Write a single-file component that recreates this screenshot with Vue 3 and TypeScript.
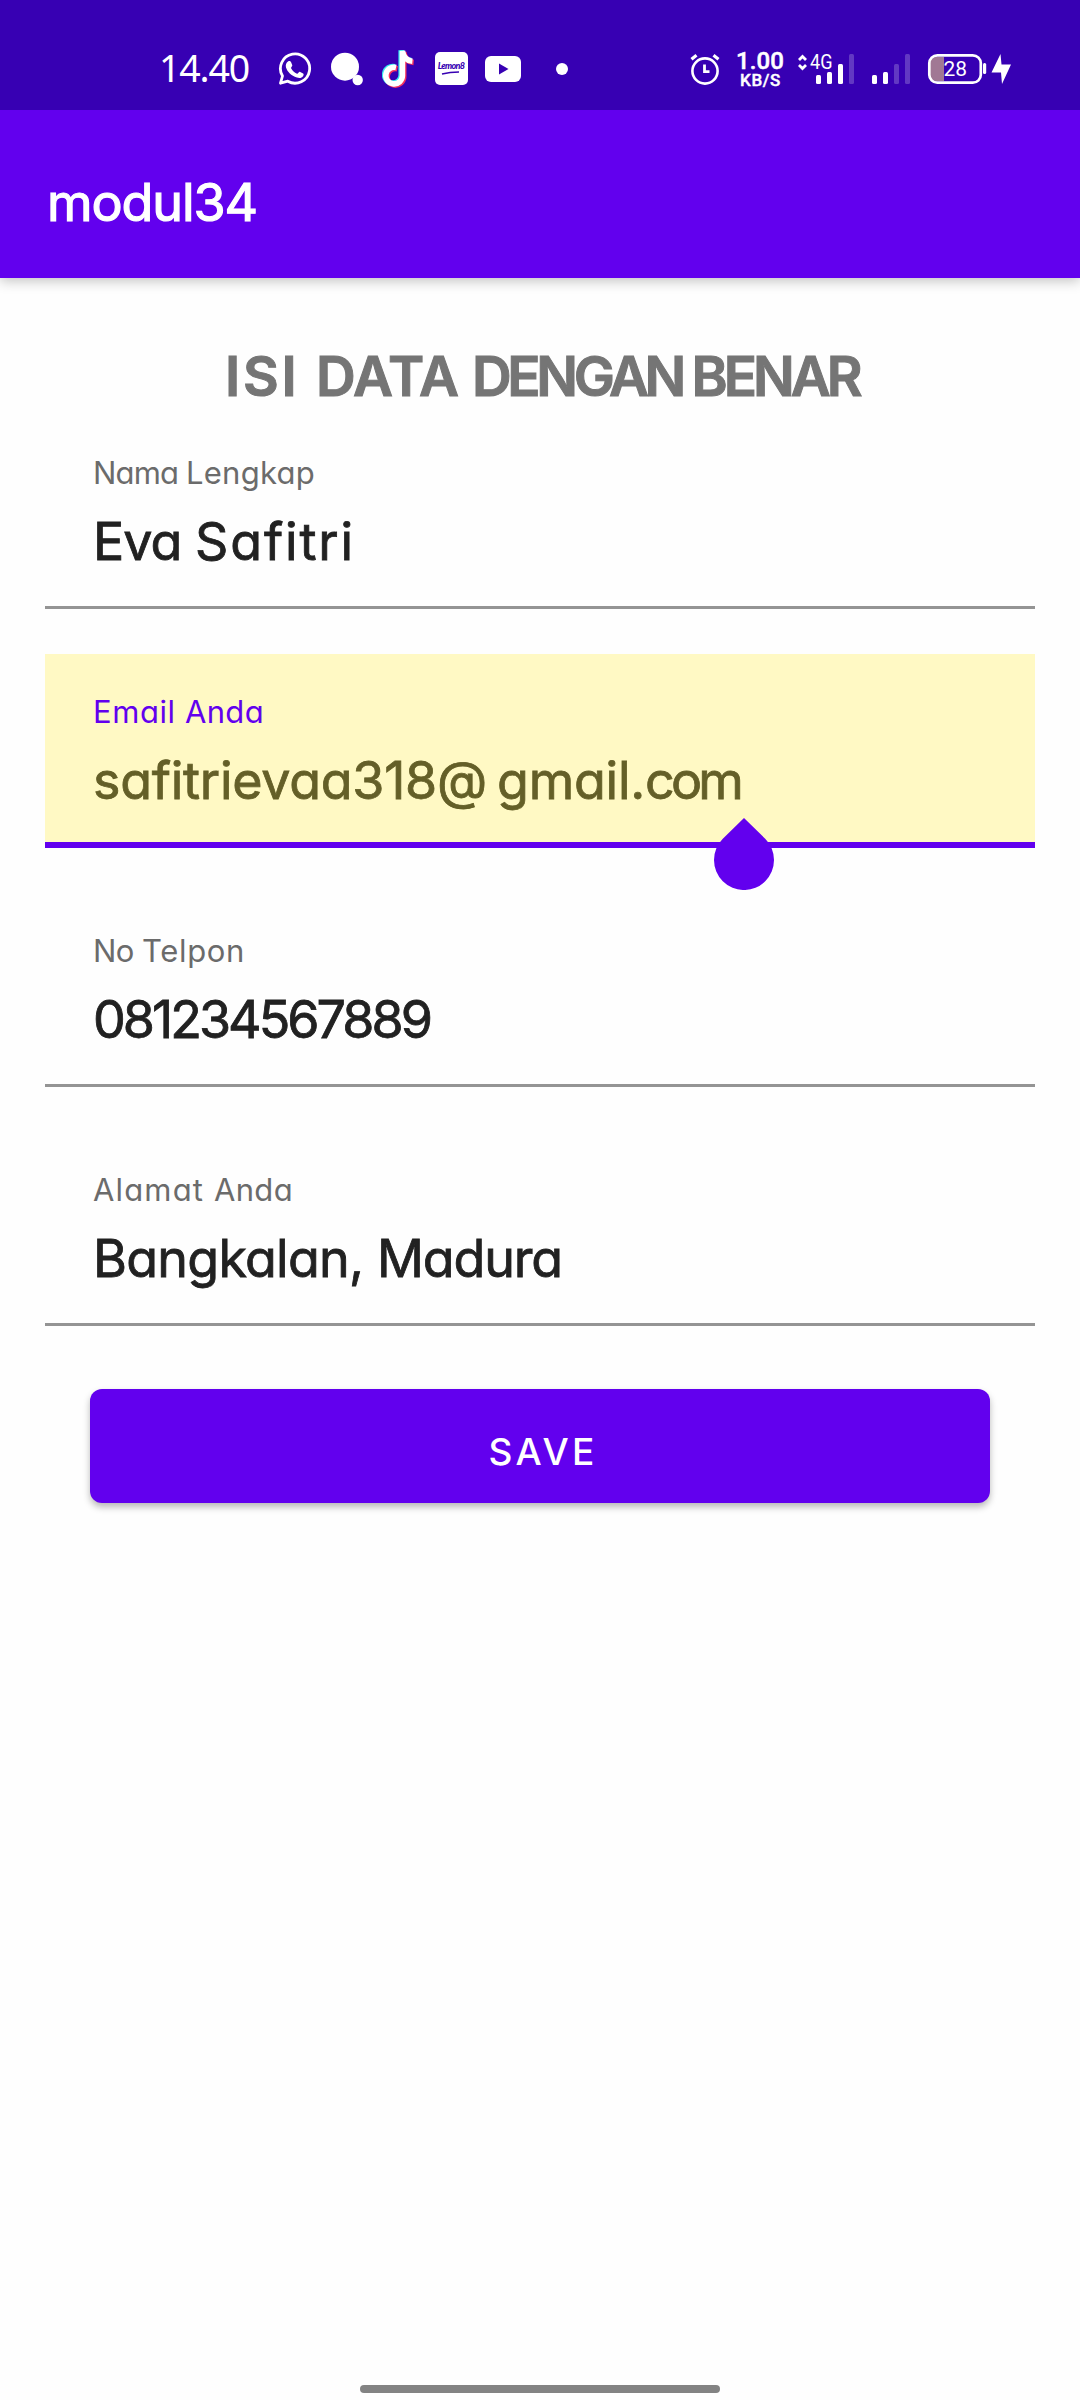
<script setup lang="ts">
interface Segment {
  text: string
  width: number
}

interface Field {
  id: string
  label: Segment[]
  value: Segment[]
  active?: boolean
}

// Spreads the tracking of a run so that it fills the given advance width.
const vFit = {
  mounted(el: HTMLElement, binding: { value: number }) {
    const count = (el.textContent ?? '').length
    const natural = el.getBoundingClientRect().width
    if (count > 0) el.style.letterSpacing = `${(binding.value - natural) / count}px`
  },
}

const heading: Segment[] = [
  { text: 'ISI ', width: 91 },
  { text: 'DATA ', width: 156 },
  { text: 'DENGAN ', width: 219.5 },
  { text: 'BENAR', width: 167 },
]

const fields: Field[] = [
  {
    id: 'name',
    label: [{ text: 'Nama ', width: 93 }, { text: 'Lengkap', width: 129 }],
    value: [{ text: 'Eva ', width: 102 }, { text: 'Safitri', width: 160 }],
  },
  {
    id: 'email',
    label: [{ text: 'Email ', width: 92 }, { text: 'Anda', width: 79 }],
    value: [
      { text: 'safitrievaa318', width: 344 },
      { text: '@', width: 60 },
      { text: 'gmail.', width: 148 },
      { text: 'com', width: 95 },
    ],
    active: true,
  },
  {
    id: 'phone',
    label: [{ text: 'No ', width: 49 }, { text: 'Telpon', width: 103 }],
    value: [{ text: '081234567889', width: 337 }],
  },
  {
    id: 'address',
    label: [{ text: 'Alamat ', width: 121 }, { text: 'Anda', width: 79 }],
    value: [{ text: 'Bangkalan, ', width: 284 }, { text: 'Madura', width: 185 }],
  },
]
</script>

<template>
  <div class="screen">
    <header class="status">
      <span v-fit="90" class="clock">14.40</span>
      <svg class="whatsapp" width="36" height="40" viewBox="277 50 36 40">
        <path d="M281.5 83.200l2-7.200a14.600 14.600 0 1 1 5.300 5.200z" fill="none" stroke="#fff" stroke-width="2.800" stroke-linejoin="round" />
        <path d="M289 61.500c1.500-.9 2.600-.4 3.200 1l1.100 2.800c.2.700-1.500 2.300-1.200 3 1.300 2.500 3.300 4.300 5.900 5.400.9.300 2-2.200 2.800-1.900l3.300 1.600c1 .5.400 2.500-.5 3.300-1.600 1.500-3.600 1.500-5.700.8-5.700-1.900-9.500-5.600-10.900-10-.7-2.300.3-4.900 2-6z" fill="#fff" />
      </svg>
      <svg class="bubble" width="34" height="40" viewBox="330 50 34 40" fill="#fff">
        <circle cx="345" cy="66.700" r="14" /><circle cx="357.700" cy="80" r="5.200" />
      </svg>
      <svg class="tiktok" width="34" height="40" viewBox="382 50 34 40">
        <g fill="none" stroke-width="5.600">
          <path d="M396 67.500a8.300 8.300 0 1 0 6.400 8.300V51c1 6 4.500 9.800 10 10.300" stroke="#35e6ee" transform="translate(-1.200 -.8)" />
          <path d="M396 67.500a8.300 8.300 0 1 0 6.400 8.300V51c1 6 4.500 9.800 10 10.300" stroke="#f5315f" transform="translate(1.300 1.200)" />
          <path d="M396 67.500a8.300 8.300 0 1 0 6.400 8.300V51c1 6 4.500 9.800 10 10.300" stroke="#fff" />
        </g>
      </svg>
      <span class="lemon"><span class="lemon-text">Lemon8</span>
        <svg width="20" height="4" viewBox="0 0 20 4"><path d="M1 3Q9 1 18 1" fill="none" stroke="#3700b3" stroke-width="1.400" /></svg>
      </span>
      <svg class="youtube" width="38" height="40" viewBox="484 50 38 40">
        <rect x="485" y="56" width="36" height="26" rx="6" fill="#fff" />
        <path d="M499 63.500v11l9.500-5.500z" fill="#3700b3" />
      </svg>
      <svg class="dot" width="12" height="40" viewBox="556 50 12 40"><circle cx="562" cy="69" r="6" fill="#fff" /></svg>
      <svg class="alarm" width="32" height="40" viewBox="689 50 32 40" fill="none" stroke="#fff">
        <circle cx="705" cy="71" r="12.600" stroke-width="2.600" />
        <path d="M704.500 64.500v7.200h5" stroke-width="2.800" />
        <path d="M691.500 59.300l5-4M718.500 59.300l-5-4" stroke-width="3.200" />
      </svg>
      <span class="speed"><span v-fit="48" class="rate">1.00</span><span v-fit="41" class="unit">KB/S</span></span>
      <span class="sim">
        <svg width="58" height="40" viewBox="797 50 58 40">
          <path d="M799 60l3.500-3.500 3.500 3.500M799 65l3.500 3.500 3.500-3.500" fill="none" stroke="#fff" stroke-width="2.800" />
          <g fill="#fff">
            <rect x="816" y="75" width="5" height="9" rx="1.500" /><rect x="827" y="72" width="5" height="12" rx="1.500" />
            <rect x="838" y="64" width="5" height="20" rx="1.500" /><rect x="849" y="54" width="5" height="30" rx="1.500" opacity=".22" />
          </g>
          <text x="810" y="69" font-size="21" fill="#fff" textLength="22.500" lengthAdjust="spacingAndGlyphs">4G</text>
        </svg>
      </span>
      <svg class="signal" width="40" height="40" viewBox="871 50 40 40" fill="#fff">
        <rect x="872" y="75" width="5" height="9" rx="1.500" /><rect x="883" y="72" width="5" height="12" rx="1.500" />
        <rect x="894" y="64" width="5" height="20" rx="1.500" opacity=".22" /><rect x="905" y="54" width="5" height="30" rx="1.500" opacity=".22" />
      </svg>
      <svg class="battery" width="86" height="40" viewBox="927 50 86 40">
        <path d="M944 57h-8q-6 0-6 6v12q0 6 6 6h8z" fill="#a17894" />
        <rect x="929.300" y="55.300" width="51.500" height="27.400" rx="8" fill="none" stroke="#fff" stroke-width="2.700" />
        <rect x="983" y="63" width="3.200" height="11" rx="1.500" fill="#fff" />
        <text x="943.500" y="76" font-size="20" fill="#fff" textLength="23.500" lengthAdjust="spacingAndGlyphs">28</text>
        <path d="M1000.500 54l-9 18.500h9.500l1 11.500 9-19.500h-9.500z" fill="#fff" />
      </svg>
    </header>

    <div class="toolbar"><span v-fit="210" class="title">modul34</span></div>

    <main class="form">
      <h1 class="heading"><span v-for="s in heading" :key="s.text" v-fit="s.width">{{ s.text }}</span></h1>
      <section v-for="f in fields" :key="f.id" class="field" :class="{ active: f.active }">
        <div class="label"><span v-for="s in f.label" :key="s.text" v-fit="s.width">{{ s.text }}</span></div>
        <div class="value"><span v-for="s in f.value" :key="s.text" v-fit="s.width">{{ s.text }}</span></div>
        <svg v-if="f.active" class="handle" width="60" height="72" viewBox="0 0 60 72">
          <path d="M30 0L51.200 20.800A30 30 0 1 1 8.800 20.800Z" fill="#6200ee" />
        </svg>
      </section>
      <button class="save" type="button"><span v-fit="109">SAVE</span></button>
    </main>
    <div class="nav"></div>
  </div>
</template>

<style>
body { background: #fff; }
</style>

<style scoped>
.screen {
  display: flex;
  flex-direction: column;
  box-sizing: border-box;
  width: 1080px;
  height: 2400px;
  overflow: hidden;
  background: #fefefe;
  font-family: Inter, Lato, sans-serif;
  font-feature-settings: 'cv11' 1;
}
svg { display: block; flex: none; }
.status {
  position: relative;
  z-index: 1;
  display: flex;
  flex: none;
  align-items: flex-start;
  box-sizing: border-box;
  height: 110px;
  padding: 50px 0 0 159px;
  background: #3700b3;
  color: #fff;
  font-family: Roboto, sans-serif;
}
.clock { font: 37.500px/40px 'Noto Sans', sans-serif; margin-top: -2px; white-space: pre; }
.whatsapp { margin-left: 27px; }
.bubble { margin-left: 18px; }
.tiktok { margin-left: 18px; }
.lemon {
  display: flex;
  flex: none;
  flex-direction: column;
  align-items: center;
  box-sizing: border-box;
  width: 33px;
  height: 33px;
  margin: 2px 0 0 18.500px;
  padding-top: 8px;
  border-radius: 5px;
  background: #fff;
  color: #3700b3;
}
.lemon-text { font: italic 900 9px/11px Lato, sans-serif; letter-spacing: -.7px; }
.youtube { margin-left: 16.500px; }
.dot { margin-left: 34px; }
.alarm { margin-left: 121px; }
.speed { display: flex; flex: none; flex-direction: column; align-items: flex-start; width: 50px; margin-left: 15px; }
.rate { font-size: 24px; font-weight: 500; line-height: 22px; -webkit-text-stroke: .5px #fff; }
.unit { margin-left: 4px; font-size: 17px; font-weight: 500; line-height: 17px; -webkit-text-stroke: .4px #fff; }
.sim { margin-left: 11px; }
.signal { margin-left: 16px; }
.battery { margin-left: 16px; }
.toolbar {
  display: flex;
  flex: none;
  box-sizing: border-box;
  height: 168px;
  padding: 63px 0 0 47px;
  background: #6200ee;
  box-shadow: 0 3px 12px rgba(0, 0, 0, .24);
  color: #fff;
}
.title { font-size: 52px; font-weight: 400; line-height: 60px; white-space: pre; -webkit-text-stroke: 1.200px #fff; }
.form { display: flex; flex-direction: column; padding: 67px 45px 0; }
.heading {
  display: flex;
  height: 70px;
  margin: 0 0 0 180px;
  color: #757575;
  font-size: 55px;
  font-weight: 600;
  line-height: 62px;
  white-space: pre;
  -webkit-text-stroke: 1px currentColor;
}
.field {
  position: relative;
  box-sizing: border-box;
  height: 194px;
  margin-bottom: 45px;
  padding: 40px 0 0 48px;
  border-bottom: 3px solid #949494;
  color: #212121;
}
.active { background: #fff9c4; border-bottom: 6px solid #6200ee; color: #645f28; }
.label { display: flex; height: 40px; color: #6b6b6b; font-size: 31px; line-height: 35px; white-space: pre; }
.active .label { color: #6200ee; }
.value { display: flex; font-size: 52px; line-height: 93px; white-space: pre; -webkit-text-stroke: .8px currentColor; }
.handle { position: absolute; left: 669px; top: 164px; }
.save {
  display: flex;
  justify-content: center;
  box-sizing: border-box;
  width: 900px;
  height: 114px;
  margin: 18px auto 0;
  padding: 40px 0 0 6px;
  border: 0;
  border-radius: 12px;
  background: #6200ee;
  box-shadow: 0 4px 7px rgba(0, 0, 0, .28);
  color: #fff;
  font: 500 37px/46px Inter, Lato, sans-serif;
}
.nav { width: 360px; height: 8px; margin: auto auto 7px; border-radius: 4px; background: #838383; }
</style>
